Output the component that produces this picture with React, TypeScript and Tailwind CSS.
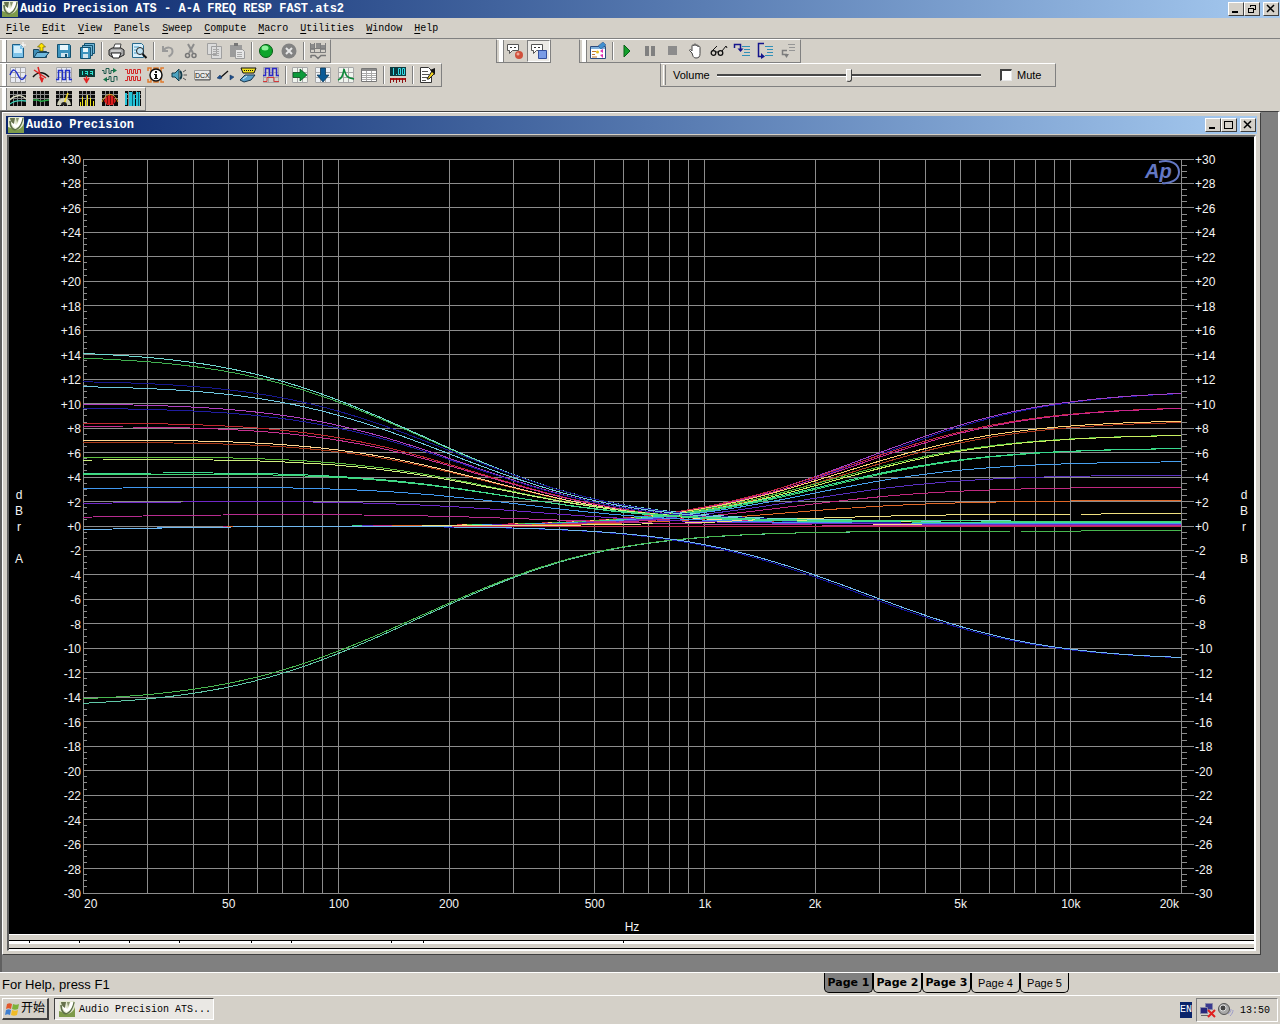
import type { ReactNode } from 'react';

const MONO = "font-['Liberation_Mono','Noto_Sans_CJK_SC',monospace]";
const SANS = "font-['Liberation_Sans',sans-serif]";

/* ---------- Icons ---------- */

function Icon({ children }: { children: ReactNode }) {
  return (
    <svg width="18" height="18" viewBox="0 0 18 18" fill="none" className="shrink-0" aria-hidden="true">
      {children}
    </svg>
  );
}

function LogoIcon() {
  return (
    <svg width="16" height="16" viewBox="0 0 16 16" fill="none" className="shrink-0" aria-hidden="true">
      <rect width="16" height="16" rx="1" fill="#e4ead0" />
      <path d="M0 10v6h16V6c-2 6-7 8-10 6z" fill="#7d9a4a" />
      <path d="M2 4c0 7 4 10 7 8 4-2 5-7 6-11" stroke="#5d6f49" strokeWidth="1.500" />
      <path d="M5 3c0 5 2 7 4 6s3-4 4-8" stroke="#fff" strokeWidth="3" />
      <path d="M2 1h5l-1 6c-2-1-4-3-4-6z" fill="#66724c" />
      <path d="M8 1h3l-2 5z" fill="#8a9670" />
    </svg>
  );
}

const frame = <path d="M1.500 1.500h15v15h-15zM6.500 1v16M11.500 1v16M1 6.500h16M1 11.500h16" stroke="#a8a8a8" />;
const darkFrame = (
  <>
    <path d="M1 1h16v15H1z" fill="#0a0a0a" />
    <path d="M4.500 1v15M8.500 1v15M12.500 1v15M1 4.500h16M1 8.500h16" stroke="#8a8a8a" />
  </>
);
const lines = <path d="M9 4.500h8M11 7.500h6M11 10.500h6M9 13.500h8" stroke="#2f8fb8" />;

const icons = {
  newFile: (
    <>
      <path d="M3.500 2.500h8l3 3v10h-11z" fill="#7fc4ea" stroke="#1c5f88" />
      <path d="M5 4h6v3h2v4H5z" fill="#d4effc" />
      <path d="M14 0v6M11 3h6" stroke="#fff" />
    </>
  ),
  open: (
    <>
      <path d="M1.500 15.500v-8h5l1 2h7v6z" fill="#3f8fb8" stroke="#17435c" />
      <path d="M2 15.500l3-5h12l-4 5z" fill="#6fb9dd" stroke="#17435c" />
      <path d="M8 9V5H5.500L9.500 1l4 4H11v4z" fill="#ffe600" stroke="#6a5b00" strokeWidth=".7" />
    </>
  ),
  save: (
    <>
      <path d="M2.500 2.500h12l1 1v12h-13z" fill="#3d93bd" stroke="#12506f" />
      <path d="M5 3h8v5H5z" fill="#e8f6fc" />
      <path d="M6 11h7v4H6z" fill="#cfe4ee" />
      <path d="M10 12h2v3h-2z" fill="#12506f" />
    </>
  ),
  saveAll: (
    <>
      <path d="M6.500 1.500h10v10h-10z" fill="#6fb3d3" stroke="#12506f" />
      <path d="M4.500 3.500h10v10h-10z" fill="#6fb3d3" stroke="#12506f" />
      <path d="M2.500 5.500h10v11h-10z" fill="#3d93bd" stroke="#12506f" />
      <path d="M5 6h5v4H5z" fill="#e8f6fc" />
      <path d="M5 12h5v4H5z" fill="#cfe4ee" />
    </>
  ),
  print: (
    <>
      <path d="M6 7l2-5h6l-1 5z" fill="#fff" stroke="#444" />
      <path d="M2 8l3-2h9l3 2v5l-4 2H5l-3-2z" fill="#a6a6a6" stroke="#222" />
      <path d="M4 11h10l-2 5H6z" fill="#fff" stroke="#222" />
      <path d="M4 9h10" stroke="#eee" />
    </>
  ),
  preview: (
    <>
      <path d="M2.500 1.500h9l2 2v12h-11z" fill="#d8eefa" stroke="#286a8e" />
      <path d="M4 5h5M4 8h3M4 11h3" stroke="#4a9cc4" />
      <circle cx="10" cy="9" r="3.500" fill="#bfe2f4" stroke="#222" />
      <path d="M12.500 12l4 4" stroke="#111" strokeWidth="2" />
    </>
  ),
  undo: <path d="M4 4v5h5M4.500 8.500c3-4 9-4 9 1 0 3-2 4-4 5" stroke="#9a9a9a" strokeWidth="2" />,
  cut: (
    <>
      <path d="M6 2l5 9M12 2L7 11" stroke="#8c8c8c" strokeWidth="2" />
      <circle cx="5.500" cy="13.500" r="2" stroke="#777" strokeWidth="1.500" />
      <circle cx="12" cy="13.500" r="2" stroke="#777" strokeWidth="1.500" />
    </>
  ),
  copy: (
    <>
      <path d="M2.500 1.500h9v11h-9zM6.500 4.500h10v12h-10z" fill="#dcdcdc" stroke="#a0a0a0" />
      <path d="M8 7.500h6M8 9.500h6M8 11.500h6M8 13.500h6" stroke="#a8a8a8" />
    </>
  ),
  paste: (
    <>
      <path d="M2 3h12v12H2z" fill="#9b9b9b" />
      <path d="M6 1h4v3H6z" fill="#777" />
      <path d="M7.500 7.500h7l2 2v7h-9z" fill="#e6e6e6" stroke="#9b9b9b" />
      <path d="M9 10.500h5M9 12.500h5M9 14.500h5" stroke="#aaa" />
    </>
  ),
  go: (
    <>
      <circle cx="9" cy="9" r="6.500" fill="#0ea52c" stroke="#055a15" />
      <ellipse cx="8" cy="6" rx="3.500" ry="2.500" fill="#8ef29c" />
    </>
  ),
  stopRound: (
    <>
      <circle cx="9" cy="9" r="7.500" fill="#828282" />
      <path d="M6 6l6 6M12 6l-6 6" stroke="#e6e6e6" strokeWidth="2" />
    </>
  ),
  sweepGray: (
    <>
      <path d="M2 2h3v6H2zM7 1h4v5H7zM12 3h4v5h-4z" fill="#8c8c8c" />
      <path d="M1.500 1v9.500h15V1M5.500 1v9M11.500 1v9M1 6.500h16" stroke="#7d7d7d" />
      <path d="M2 16v-3M2 13.500h4l3 3 3-3h5" stroke="#777" strokeWidth="1.500" />
    </>
  ),
  sine: (
    <>
      <path d="M1 1h16v16H1z" fill="#e8eaf2" />
      {frame}
      <path d="M1 9c3-7 5-6 8 0s5 6 8 0" stroke="#1f2fc8" strokeWidth="1.500" />
    </>
  ),
  redProbe: (
    <>
      <path d="M1 11c4-5 10-6 16 0" stroke="#111" strokeWidth="1.500" />
      <path d="M6 1l4 15M2 4l12 8" stroke="#e02424" strokeWidth="1.500" />
      <path d="M7 11l3 6 2-5z" fill="#e02424" />
    </>
  ),
  square: (
    <>
      <path d="M1 1h16v16H1z" fill="#e8eaf2" />
      {frame}
      <path d="M1 13.500h2.500v-9h4v9h3v-9h4v9H17" stroke="#1f2fc8" strokeWidth="1.500" />
    </>
  ),
  meter: (
    <>
      <path d="M1 3h16v8H1z" fill="#0b3a36" />
      <path d="M4.500 5v4M7 5.500h2.500v2H7M9.500 5v4M12 5.500h2.500v2H12M14.500 5v4" stroke="#2fe0cf" />
      <path d="M8.500 10v7M6 12l2.500 4 2.500-4" stroke="#e02424" strokeWidth="1.500" />
    </>
  ),
  swap: (
    <>
      <path d="M1 4.500h2v3h2v-5h3v5h2v-3h3" stroke="#1e5a4c" />
      <path d="M12 2l4 2.500L12 7zM6 11l-4 2.500L6 16z" fill="#14794a" />
      <path d="M5 13.500h3v-3h2v5h3v-5h3v4" stroke="#1e5a4c" />
    </>
  ),
  redPulse: (
    <path
      d="M1 3.500h2.500v4h2v-4h2v4h2v-4h2v4h2v-4h3v4M1 14.500h2.500v-4h2v4h2v-4h2v4h2v-4h2v4h3v-4"
      stroke="#d42626"
    />
  ),
  info: (
    <>
      <path d="M1 5V2h3v3h3V2h4v3h3V2h3M1 13v3h3v-3h3v3h4v-3h3v3h3" stroke="#e07a2c" strokeWidth="1.500" />
      <circle cx="9" cy="9" r="6" fill="#fff" stroke="#111" strokeWidth="1.500" />
      <path d="M8 5h2v2H8zM7 8h3v4h1v1H7v-1h1V9H7z" fill="#111" />
    </>
  ),
  speaker: (
    <>
      <path d="M2 7h3l4-4v12l-4-4H2z" fill="#4da3c0" stroke="#123c4c" />
      <path d="M10 5c2 2 2 6 0 8" stroke="#123c4c" strokeWidth="2" />
      <path d="M13 6l3-2M13.500 9H17M13 12l3 2" stroke="#555" />
    </>
  ),
  dcx: (
    <>
      <path d="M1.500 4.500h16v9h-16z" fill="#e8e8e8" stroke="#999" />
      <path d="M17 4v10H2" stroke="#555" />
      <text x="2" y="12" fontSize="7" fontFamily="Liberation Sans" fill="#111">
        DCX
      </text>
    </>
  ),
  relay: (
    <>
      <path d="M4 12l8-7" stroke="#111" strokeWidth="1.300" />
      <path d="M1 12l3-3 2 3-2 1zM14 9l4 2-4 3z" fill="#1f4f8e" stroke="#12305a" strokeWidth=".5" />
    </>
  ),
  connector: (
    <>
      <path d="M2 2h15l-2 5H4z" fill="#f0e020" stroke="#111" />
      <path d="M5 4.500h9" stroke="#111" strokeDasharray="1 1" />
      <path d="M1 14l5-5h10l-4 5-7 2z" fill="#5aa0cc" stroke="#17364c" />
      <path d="M4 13l4-3" stroke="#d4ecf8" />
    </>
  ),
  dualSquare: (
    <>
      {frame}
      <path d="M1 9.500h2.500v-7h4v7h3v-7h4v7H17" stroke="#2a28c8" strokeWidth="1.500" />
      <path d="M1 15.500h4v-4h7v4h5" stroke="#d43a3a" />
    </>
  ),
  arrowRight: (
    <>
      <path d="M1 1h16v16H1z" fill="#f0f4ee" />
      {frame}
      <path d="M2 6.500h7V3l7 6-7 6v-3.500H2z" fill="#0c9a3a" stroke="#07461d" strokeWidth=".7" />
    </>
  ),
  arrowDown: (
    <>
      <path d="M1 1h16v16H1z" fill="#eef2f6" />
      {frame}
      <path d="M6.500 2v7H3l6 7 6-7h-3.500V2z" fill="#0a5a96" stroke="#083450" strokeWidth=".7" />
    </>
  ),
  peak: (
    <>
      <path d="M1 1h16v16H1z" fill="#f0f4ee" />
      {frame}
      <path d="M1 14c4-1 5-5 6-11 2 8 4 9 10 10" stroke="#0c8a3a" strokeWidth="1.500" />
    </>
  ),
  table: (
    <>
      <path d="M1.500 2.500h15v13h-15z" fill="#fff" stroke="#777" />
      <path d="M2 3h14v2H2z" fill="#8a8a8a" />
      <path d="M2 7.500h14M2 9.500h14M2 11.500h14M2 13.500h14M6.500 5v10M11.500 5v10" stroke="#aaa" />
    </>
  ),
  readout: (
    <>
      <path d="M1 1h16v9H1z" fill="#0b3a40" />
      <path d="M4.500 2v7M7 8.500h1M9.500 2.500h2v6h-2zM13.500 2.500h2v6h-2z" stroke="#35dce8" />
      <path d="M1 12h16v2H1z" fill="#b41818" />
      <path d="M1.500 12v5M4.500 12v4M7.500 12v5M10.500 12v4M13.500 12v5M16.500 12v4" stroke="#8e1010" />
    </>
  ),
  note: (
    <>
      <path d="M2.500 1.500h8l3 3v12h-11z" fill="#fff" stroke="#333" />
      <path d="M4 5.500h6M4 8.500h7M4 11.500h7M4 14.500h4" stroke="#555" />
      <path d="M9 13l5-8 3 2-6 6z" fill="#f0d020" stroke="#222" />
      <path d="M12 4l5 5V2z" fill="#111" />
    </>
  ),
  scope: (
    <>
      {darkFrame}
      <path d="M1 10c4-5 12-6 16-1" stroke="#d8d8c0" strokeWidth="1.300" />
      <path d="M1 14c4-3 8-4 16-3" stroke="#3ed1b8" strokeWidth="1.300" />
    </>
  ),
  flat: (
    <>
      {darkFrame}
      <path d="M1 10h5c3 3 6 0 11 0" stroke="#27a844" strokeWidth="1.500" />
    </>
  ),
  gauge: (
    <>
      {darkFrame}
      <path d="M2 15a7 7 0 0114 0z" fill="#cfcfb8" />
      <path d="M9 14l4-11" stroke="#f0d820" strokeWidth="1.500" />
      <path d="M6 15a3 3 0 016 0z" fill="#222" />
    </>
  ),
  bars: (
    <>
      {darkFrame}
      <path d="M2.500 16v-4M4.500 16V7M7.500 16v-6M9.500 16V5M12.500 16V8M15.500 16v-5" stroke="#f0e420" />
    </>
  ),
  redBand: (
    <>
      {darkFrame}
      <path d="M3 11c3-8 9-8 12 0l-3 4H6z" fill="#dd1f1f" />
      <path d="M1 12c4-10 12-10 16 0" stroke="#e2a020" />
      <path d="M6.500 6v8M9.500 5v9M12.500 6v8" stroke="#7a0c0c" />
    </>
  ),
  cyanBand: (
    <>
      {darkFrame}
      <path d="M1 3h2v12H1zM5 2h3v14H5zM9 5h2v11H9zM12 2h4v14h-4z" fill="#25c3d8" />
      <path d="M8.500 2v14M14.500 2v14" stroke="#0c5f70" />
    </>
  ),
  bubbleRed: (
    <>
      <path d="M1.500 2.500h11v6h-6l-3 3v-3h-2z" fill="#fff" stroke="#555" />
      <path d="M4 5.500h2M8 5.500h2" stroke="#333" />
      <circle cx="13" cy="13" r="4" fill="#d0503c" />
      <circle cx="12" cy="12" r="1.500" fill="#f0a898" />
    </>
  ),
  bubbleBlue: (
    <>
      <path d="M1.500 2.500h11v6h-6l-3 3v-3h-2z" fill="#fff" stroke="#555" />
      <path d="M4 5.500h2M8 5.500h2" stroke="#333" />
      <path d="M8.500 8.500h8v8h-8z" fill="#7a9ce6" stroke="#34509e" />
    </>
  ),
  macro: (
    <>
      <path d="M1.500 4.500h15v12h-15z" fill="#fff" stroke="#2b4a7e" />
      <path d="M2 5h14v2H2z" fill="#7fb0dc" />
      <path d="M9 4l5-4 3 3-5 4z" fill="#3f8fd0" stroke="#2b4a7e" strokeWidth=".5" />
      <path d="M3 9.500h4M3 12.500h3M3 15h5" stroke="#c07830" />
      <path d="M11 9l3-2v4zM11 13l3-1v4z" fill="#e030b0" />
      <circle cx="8.500" cy="10" r="1.500" fill="#e8c020" />
    </>
  ),
  play: <path d="M6 3l6 6-6 6z" fill="#14a02c" stroke="#0a6018" />,
  pause: <path d="M4 4h4v10H4zM10 4h4v10h-4z" fill="#808080" />,
  stop: <path d="M4 4h9v9H4z" fill="#8c8c8c" />,
  hand: (
    <path
      d="M5 11L2.500 8.500c0-1.500 1.500-1 2.500.5V4c0-1.500 2-1.500 2 0v-1c0-1.500 2-1.500 2 0v1c0-1.500 2-1.500 2 0v1c0-1.500 2-1 2 .5v6c0 3-1 4.500-4 4.500s-3-2-4-5z"
      fill="#fff"
      stroke="#444"
    />
  ),
  glasses: (
    <>
      <circle cx="3.500" cy="11" r="2.300" stroke="#111" strokeWidth="1.300" />
      <circle cx="10.500" cy="11" r="2.300" stroke="#111" strokeWidth="1.300" />
      <path d="M2 9l5-5M12 9l4-5 1 2M6 10h2" stroke="#111" />
    </>
  ),
  stepInto: (
    <>
      {lines}
      <path d="M1.500 6V2.500h6V8" stroke="#14148c" strokeWidth="1.500" />
      <path d="M4.500 6.500h6L7.500 10z" fill="#14148c" />
    </>
  ),
  stepOver: (
    <>
      {lines}
      <path d="M8 1.500H2.500v13H6" stroke="#14148c" strokeWidth="1.500" />
      <path d="M5 11l4 3.500L5 17z" fill="#14148c" />
    </>
  ),
  stepOut: (
    <>
      <path d="M9 2.500h7M10 5.500h6M10 8.500h6" stroke="#969696" />
      <path d="M8 8.500H3.500v4H8" stroke="#7d7d7d" strokeWidth="1.500" />
      <path d="M5 12h5l-2.500 4z" fill="#7d7d7d" />
    </>
  ),
};

type IconName = keyof typeof icons;

/* ---------- Toolbars ---------- */

function Separator() {
  return (
    <div className="w-[6px] h-full flex justify-center py-[2px]">
      <div className="w-[2px] border-l border-[#808080] bg-white" />
    </div>
  );
}

function ToolGroup({ items, pressed, className = '' }: { items: (IconName | '|')[]; pressed?: IconName; className?: string }) {
  return (
    <div
      role="toolbar"
      className={`flex items-stretch h-[24px] border-t border-t-white border-b border-b-[#808080] border-r border-r-[#808080] pl-[2px] ${className}`}
    >
      <div className="w-[5px] bg-white border-r border-[#808080] shrink-0" />
      {items.map((item, i) =>
        item === '|' ? (
          <Separator key={i} />
        ) : (
          <button
            key={i}
            type="button"
            aria-label={item}
            className={`w-[23px] flex items-center pl-[2px] ${
              pressed === item ? 'bg-[#eceae6] border border-t-[#808080] border-l-[#808080] border-b-white border-r-white' : ''
            }`}
          >
            <Icon>{icons[item]}</Icon>
          </button>
        )
      )}
    </div>
  );
}

function VolumeGroup() {
  return (
    <div
      className={`${SANS} ml-[218px] flex items-center w-[396px] h-[24px] text-[11px] text-black border-t border-t-white border-l border-l-[#808080] border-b border-b-[#808080] border-r border-r-[#808080]`}
    >
      <div className="ml-[2px] w-[3px] h-[20px] border-l border-l-white border-r border-r-[#808080]" />
      <label htmlFor="volume" className="ml-[7px] w-[44px]">
        Volume
      </label>
      <input
        id="volume"
        type="range"
        min="0"
        max="100"
        defaultValue="50"
        className="w-[264px] h-[16px] appearance-none bg-transparent [&::-webkit-slider-runnable-track]:h-[3px] [&::-webkit-slider-runnable-track]:border-t-2 [&::-webkit-slider-runnable-track]:border-t-[#484848] [&::-webkit-slider-runnable-track]:bg-white [&::-webkit-slider-thumb]:appearance-none [&::-webkit-slider-thumb]:w-[6px] [&::-webkit-slider-thumb]:h-[13px] [&::-webkit-slider-thumb]:-mt-[7px] [&::-webkit-slider-thumb]:rounded-b-[3px] [&::-webkit-slider-thumb]:bg-[#e4e2dc] [&::-webkit-slider-thumb]:border [&::-webkit-slider-thumb]:border-t-white [&::-webkit-slider-thumb]:border-l-white [&::-webkit-slider-thumb]:border-r-[#404040] [&::-webkit-slider-thumb]:border-b-[#404040]"
      />
      <label className="ml-[19px] flex items-center gap-[5px]">
        <input
          type="checkbox"
          className="appearance-none w-[12px] h-[12px] bg-white border-t-2 border-l-2 border-b border-r border-t-[#404040] border-l-[#404040] border-b-[#e8e8e8] border-r-[#e8e8e8] checked:bg-[#404040]"
        />
        Mute
      </label>
    </div>
  );
}

/* ---------- Window chrome ---------- */

function CaptionButton({ kind, className = '' }: { kind: 'Minimize' | 'Restore' | 'Maximize' | 'Close'; className?: string }) {
  return (
    <button
      type="button"
      aria-label={kind}
      className={`w-[16px] h-[14px] bg-[#d4d0c8] border border-t-white border-l-white border-r-[#404040] border-b-[#404040] flex items-center justify-center ${className}`}
    >
      <svg width="12" height="12" viewBox="0 0 12 12" fill="none" stroke="#000" shapeRendering="crispEdges" aria-hidden="true">
        {kind === 'Minimize' && <path d="M2 9h6" strokeWidth="2" />}
        {kind === 'Maximize' && <path d="M1.500 2.500h8v7h-8zM1 2h9" strokeWidth="1" />}
        {kind === 'Restore' && <path d="M4 2h6M4.500 2v2M4 2.500h5.500v4H8M2 5h6M2.500 5.500h5v4h-5z" />}
        {kind === 'Close' && <path d="M2 2l7 7M9 2L2 9" strokeWidth="1.500" shapeRendering="auto" />}
      </svg>
    </button>
  );
}

function TitleBar({ title, middle }: { title: string; middle: 'Restore' | 'Maximize' }) {
  return (
    <div className="h-[18px] flex items-center pl-[2px] pr-[1px] bg-linear-to-r from-[#0a246a] to-[#a6caf0]">
      <LogoIcon />
      <span className={`${MONO} ml-[2px] flex-1 text-[12px] leading-[18px] font-bold text-white whitespace-nowrap`}>{title}</span>
      <CaptionButton kind="Minimize" />
      <CaptionButton kind={middle} />
      <CaptionButton kind="Close" className="ml-[3px]" />
    </div>
  );
}

const menus = ['File', 'Edit', 'View', 'Panels', 'Sweep', 'Compute', 'Macro', 'Utilities', 'Window', 'Help'];

function MenuBar() {
  return (
    <nav className={`${MONO} h-[21px] flex items-center gap-[12px] pl-[6px] text-[10px] text-black border-b border-[#808080]`}>
      {menus.map((m) => (
        <button key={m} type="button">
          <span className="underline underline-offset-2">{m[0]}</span>
          {m.slice(1)}
        </button>
      ))}
    </nav>
  );
}

/* ---------- Frequency response chart ---------- */

const LEFT = 74;
const RIGHT = 1172;
const TOP = 22;
const BOTTOM = 756;

const xOf = (hz: number) => LEFT + (Math.log10(hz / 20) / 3) * (RIGHT - LEFT);
const yOf = (db: number) => TOP + ((30 - db) / 60) * (BOTTOM - TOP);

const ratio = (db: number) => Math.pow(10, db / 20);

// first order low shelf
function bass(hz: number, db: number, zero = 395) {
  const pole = zero / ratio(Math.abs(db));
  const v = 10 * Math.log10((hz * hz + zero * zero) / (hz * hz + pole * pole));
  return db < 0 ? -v : v;
}

// first order high shelf
function treble(hz: number, db: number, zero = 1450) {
  const a = (hz / zero) ** 2;
  const v = 10 * Math.log10((1 + a) / (1 + a / ratio(Math.abs(db)) ** 2));
  return db < 0 ? -v : v;
}

interface Trace {
  kind: 'bass' | 'treble';
  gain: number;
  // level far above the bass shelf
  rest: number;
  color: string;
  zero?: number;
}

const traces: Trace[] = [
  { kind: 'bass', gain: 0, rest: -0.05, color: '#c02850' },
  { kind: 'treble', gain: 11.1, rest: 0, color: '#1818a0', zero: 1500 },
  { kind: 'treble', gain: 11.1, rest: 0, color: '#a040c8' },
  { kind: 'treble', gain: 9.8, rest: 0, color: '#c02840', zero: 1400 },
  { kind: 'treble', gain: 9.8, rest: 0, color: '#c8248c', zero: 1450 },
  { kind: 'treble', gain: 8.6, rest: 0, color: '#b03c20', zero: 1500 },
  { kind: 'treble', gain: 8.7, rest: 0, color: '#ffd070', zero: 1430 },
  { kind: 'treble', gain: 7.5, rest: 0, color: '#4cb43c', zero: 1420 },
  { kind: 'treble', gain: 7.5, rest: 0, color: '#c8f060', zero: 1480 },
  { kind: 'treble', gain: 6.4, rest: 0, color: '#38d070', zero: 1480 },
  { kind: 'treble', gain: 6.4, rest: 0, color: '#38d890', zero: 1430 },
  { kind: 'treble', gain: 5.3, rest: 0, color: '#48a0f0' },
  { kind: 'treble', gain: 4.2, rest: 0, color: '#5a30c0' },
  { kind: 'treble', gain: 3.2, rest: 0, color: '#c02880' },
  { kind: 'treble', gain: 2.1, rest: 0, color: '#e06828' },
  { kind: 'treble', gain: 1, rest: 0, color: '#f0e080' },
  { kind: 'bass', gain: 14, rest: 0.4, color: '#40b050' },
  { kind: 'bass', gain: 14.4, rest: 0.4, color: '#70d8d0' },
  { kind: 'bass', gain: 12, rest: 0.3, color: '#181890', zero: 410 },
  { kind: 'bass', gain: 11.6, rest: 0.3, color: '#70c8e0' },
  { kind: 'bass', gain: 10.15, rest: 0.2, color: '#b040c0' },
  { kind: 'bass', gain: 9.8, rest: 0.2, color: '#201ca0' },
  { kind: 'bass', gain: 8.6, rest: 0.1, color: '#c02830' },
  { kind: 'bass', gain: 8.3, rest: 0.1, color: '#c83090' },
  { kind: 'bass', gain: 7, rest: 0.1, color: '#a83818' },
  { kind: 'bass', gain: 7.2, rest: 0.1, color: '#ffd890' },
  { kind: 'bass', gain: 5.8, rest: 0.3, color: '#60c040' },
  { kind: 'bass', gain: 5.6, rest: 0.3, color: '#d0f080' },
  { kind: 'bass', gain: 4.4, rest: 0.4, color: '#40d878' },
  { kind: 'bass', gain: 4.5, rest: 0.3, color: '#40d890' },
  { kind: 'bass', gain: 3.3, rest: 0.2, color: '#4098f0' },
  { kind: 'bass', gain: 2.1, rest: 0.15, color: '#7028c8' },
  { kind: 'bass', gain: 1, rest: 0.05, color: '#b82c90' },
  { kind: 'bass', gain: -14.8, rest: -0.4, color: '#60c8a8', zero: 395 },
  { kind: 'bass', gain: -14.4, rest: -0.4, color: '#48b850', zero: 390 },
  { kind: 'treble', gain: -11, rest: 0, color: '#1414a0', zero: 1400 },
  { kind: 'treble', gain: -11, rest: 0, color: '#70b8f0', zero: 1450 },
];

const STEPS = 110;

function level(t: Trace, hz: number) {
  const rest = (t.rest * hz * hz) / (hz * hz + 500 * 500);
  if (t.kind === 'treble') return treble(hz, t.gain, t.zero) + rest - 0.6 / (1 + (hz / 20) ** 2);
  // the input coupling droop fades as the shelf takes over
  const droop = (0.6 * (1 - Math.abs(t.gain) / 15)) / (1 + (hz / 20) ** 2);
  return bass(hz, t.gain, t.zero) + rest - droop;
}

function tracePoints(t: Trace) {
  const pts: string[] = [];
  for (let i = 0; i <= STEPS; i++) {
    const hz = 20 * Math.pow(10, (3 * i) / STEPS);
    pts.push(`${xOf(hz).toFixed(1)},${yOf(level(t, hz)).toFixed(1)}`);
  }
  return pts.join(' ');
}

const gridHz: number[] = [];
for (const decade of [10, 100, 1000, 10000]) {
  for (let n = 1; n <= 9; n++) {
    const hz = decade * n;
    if (hz >= 20 && hz <= 20000) gridHz.push(hz);
  }
}

const gridDb = Array.from({ length: 31 }, (_, i) => 30 - i * 2);
const tickDb = Array.from({ length: 121 }, (_, i) => 30 - i / 2);
const dbLabel = (db: number) => (db >= 0 ? `+${db}` : `${db}`);

const hzLabels: [number, string][] = [
  [50, '50'],
  [100, '100'],
  [200, '200'],
  [500, '500'],
  [1000, '1k'],
  [2000, '2k'],
  [5000, '5k'],
  [10000, '10k'],
];

const axisName = [
  [0, 'd'],
  [16, 'B'],
  [32, 'r'],
] as const;

function ResponseChart() {
  return (
    <svg viewBox="0 0 1245 797" className="block w-full h-auto bg-black" role="img" aria-label="Frequency response">
      <g stroke="#8c8c8c" strokeWidth="1" shapeRendering="crispEdges">
        {gridHz.map((hz) => (
          <line key={hz} x1={xOf(hz)} x2={xOf(hz)} y1={TOP} y2={BOTTOM} />
        ))}
        {gridDb.map((db) => (
          <line key={db} x1={LEFT} x2={RIGHT + 13} y1={yOf(db)} y2={yOf(db)} />
        ))}
        {tickDb.map((db) => (
          <path key={db} d={`M${LEFT} ${yOf(db)}h4M${RIGHT} ${yOf(db)}h6`} />
        ))}
      </g>

      <g fill="none" strokeWidth="1" shapeRendering="crispEdges">
        {traces.map((t, i) => (
          <polyline key={i} points={tracePoints(t)} stroke={t.color} />
        ))}
      </g>

      <g fill="#f4f4f4" fontFamily="Liberation Sans, sans-serif" fontSize="12">
        {gridDb.map((db) => (
          <g key={db}>
            <text x={LEFT - 2} y={yOf(db) + 5} textAnchor="end">
              {dbLabel(db)}
            </text>
            <text x={RIGHT + 14} y={yOf(db) + 5}>
              {dbLabel(db)}
            </text>
          </g>
        ))}
        <text x={LEFT + 1} y="771">
          20
        </text>
        {hzLabels.map(([hz, label]) => (
          <text key={hz} x={xOf(hz)} y="771" textAnchor="middle">
            {label}
          </text>
        ))}
        <text x={RIGHT - 2} y="771" textAnchor="end">
          20k
        </text>
        <text x="623" y="794" textAnchor="middle">
          Hz
        </text>
        {axisName.map(([dy, c]) => (
          <g key={c} textAnchor="middle">
            <text x="10" y={362 + dy}>
              {c}
            </text>
            <text x="1235" y={362 + dy}>
              {c}
            </text>
          </g>
        ))}
        <text x="10" y="426" textAnchor="middle">
          A
        </text>
        <text x="1235" y="426" textAnchor="middle">
          B
        </text>
      </g>

      {/* Ap logo */}
      <text x="1136" y="41" fontFamily="Liberation Sans, sans-serif" fontSize="20" fontStyle="italic" fontWeight="bold" fill="#6478c4">
        Ap
      </text>
      <path d="M1150 25c12-3 20 2 20 10s-9 12-17 11" fill="none" stroke="#6478c4" strokeWidth="2" />
    </svg>
  );
}

/* ---------- Data editor strip under the chart ---------- */

const columnWidths = [21, 50, 50, 50, 72, 40, 100, 32, 200];

function DataStrip() {
  return (
    <div className="h-[16px] pt-[1px] bg-white">
      <div className="h-[5px] bg-[#d4d0c8]" />
      <div className="h-[3px] flex border-t border-black bg-white">
        {columnWidths.map((w, i) => (
          <div key={i} className="h-[2px] border-r border-black shrink-0" style={{ width: w }} />
        ))}
      </div>
      <div className="h-[5px] border-t border-white bg-[#d4d0c8]" />
      <div className="h-[1px] bg-black" />
    </div>
  );
}

/* ---------- Page tabs, status bar and taskbar ---------- */

const pages = [
  { name: 'Page 1', used: true },
  { name: 'Page 2', used: true },
  { name: 'Page 3', used: true },
  { name: 'Page 4', used: false },
  { name: 'Page 5', used: false },
];

function StatusBar() {
  return (
    <div className={`${SANS} h-[23px] flex items-start border-t border-white text-black`}>
      <span className="w-[824px] pl-[2px] pt-[4px] text-[13px] leading-[16px]">For Help, press F1</span>
      {pages.map((p, i) => (
        <button
          key={p.name}
          type="button"
          className={`w-[49px] h-[20px] pt-[2px] flex items-center justify-center whitespace-nowrap text-[11px] border border-t-0 border-black rounded-b-[5px] ${
            p.used ? "font-['DejaVu_Sans',sans-serif] font-bold" : ''
          } ${i === 0 ? 'bg-[#808080]' : 'bg-[#d4d0c8]'}`}
        >
          {p.name}
        </button>
      ))}
    </div>
  );
}

function Taskbar() {
  return (
    <footer className={`${MONO} h-[29px] flex items-start border-t border-white pt-[2px] text-black`}>
      <button
        type="button"
        className="ml-[2px] w-[47px] h-[22px] flex items-center gap-[1px] pl-[1px] text-[12px] whitespace-nowrap border border-t-white border-l-white border-r-2 border-b-2 border-r-[#404040] border-b-[#404040]"
      >
        <svg width="16" height="16" viewBox="0 0 16 16" className="shrink-0" aria-hidden="true">
          <path d="M3 3c2-1 3-1 5 0L7 8C5 7 4 7 2 8z" fill="#e2582c" />
          <path d="M9 3c2 1 4 1 6 0l-1 5c-2 1-4 1-6 0z" fill="#7db23a" />
          <path d="M2 9c2-1 3-1 5 0l-1 5c-2-1-3-1-5 0z" fill="#3f7fd0" />
          <path d="M8 9c2 1 4 1 6 0l-1 5c-2 1-4 1-6 0z" fill="#f0bc28" />
        </svg>
        开始
      </button>
      <button
        type="button"
        className="ml-[5px] w-[160px] h-[22px] flex items-center gap-[4px] pl-[4px] text-[10px] whitespace-nowrap bg-[#eae8e4] border border-t-[#404040] border-l-[#404040] border-b-white border-r-white"
      >
        <LogoIcon />
        Audio Precision ATS...
      </button>
      <div className="ml-auto mt-[4px] w-[12px] h-[16px] bg-[#0a246a] text-white text-[10px] leading-[16px] overflow-hidden">EN</div>
      <div className="ml-[4px] mr-[2px] w-[82px] h-[24px] flex items-center pl-[3px] border border-t-[#808080] border-l-[#808080] border-b-white border-r-white">
        <svg width="34" height="18" viewBox="0 0 34 18" fill="none" aria-hidden="true">
          <path d="M5.500 2.500h7v6h-7z" fill="#3a3a90" stroke="#8888a8" />
          <path d="M.5 6.500h7v6h-7z" fill="#26267c" stroke="#8888a8" />
          <path d="M1 14.500h7" stroke="#666" />
          <path d="M8 9l7 7M15 9l-7 7" stroke="#e02020" strokeWidth="2" />
          <circle cx="24" cy="8" r="5.500" fill="#a8a8a8" stroke="#555" />
          <circle cx="23" cy="7" r="3" fill="#444" stroke="#ddd" />
          <path d="M28 13c2-1 3-3 3-5M30 15c2-2 3-4 3-6" stroke="#9c9cc8" />
        </svg>
        <time className="ml-[6px] text-[10px]">13:50</time>
      </div>
    </footer>
  );
}

export default function App() {
  return (
    <div className="min-h-screen flex flex-col bg-[#d4d0c8]">
      <TitleBar title="Audio Precision ATS - A-A FREQ RESP FAST.ats2" middle="Restore" />
      <MenuBar />

      {/* Toolbars */}
      <div className="h-[72px] shrink-0">
        <div className="flex">
          <ToolGroup
            items={['newFile', 'open', 'save', 'saveAll', '|', 'print', 'preview', '|', 'undo', 'cut', 'copy', 'paste', '|', 'go', 'stopRound', '|', 'sweepGray']}
          />
          <ToolGroup className="ml-[165px] border-l border-l-[#808080]" items={['bubbleRed', 'bubbleBlue']} pressed="bubbleBlue" />
          <ToolGroup
            className="ml-[28px] border-l border-l-[#808080]"
            items={['macro', '|', 'play', 'pause', 'stop', 'hand', 'glasses', 'stepInto', 'stepOver', 'stepOut']}
          />
        </div>
        <div className="flex">
          <ToolGroup
            className="pr-[2px]"
            items={[
              'sine', 'redProbe', 'square', 'meter', 'swap', 'redPulse', 'info', 'speaker', 'dcx', 'relay', 'connector', 'dualSquare',
              '|', 'arrowRight', 'arrowDown', 'peak', 'table', '|', 'readout', '|', 'note',
            ]}
          />
          <VolumeGroup />
        </div>
        <div className="flex">
          <ToolGroup items={['scope', 'flat', 'gauge', 'bars', 'redBand', 'cyanBand']} />
        </div>
      </div>

      {/* Workspace */}
      <main className="flex-1 bg-[#808080] border-t border-t-[#404040] border-l-2 border-l-[#606060] border-r-2 border-r-white pb-[17px]">
        <section className="mr-[17px] p-[3px] bg-[#d4d0c8] border border-t-white border-l-white border-r-[#404040] border-b-[#404040]">
          <TitleBar title="Audio Precision" middle="Maximize" />
          <div className="mt-[1px] mx-[1px] border-t-2 border-l-2 border-t-[#606060] border-l-[#606060] border-r-2 border-r-white border-b border-b-white">
            <ResponseChart />
            <DataStrip />
          </div>
        </section>
      </main>

      <StatusBar />
      <Taskbar />
    </div>
  );
}
